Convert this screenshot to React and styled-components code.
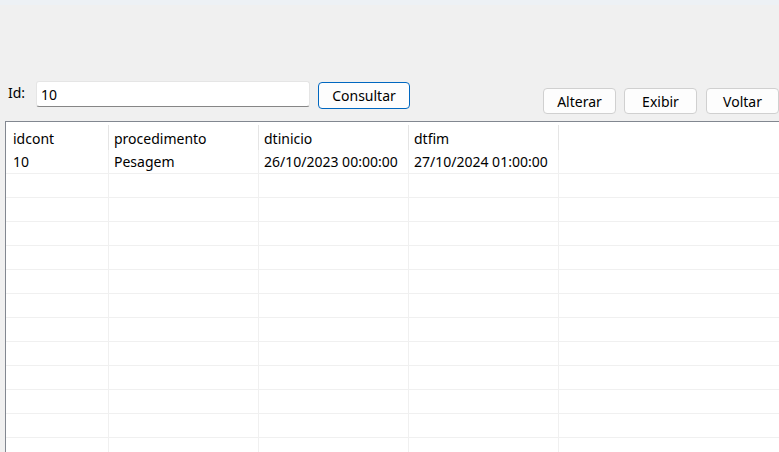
import React from 'react';
import styled, { createGlobalStyle } from 'styled-components';

const GlobalStyle = createGlobalStyle`
	html, body {
		margin: 0;
		padding: 0;
		background: #f0f0f0;
		overflow: hidden;
	}
	body {
		font-family: 'Noto Sans', 'Open Sans', sans-serif;
		color: #000;
	}
`;

const Window = styled.div`
	width: 779px;
	height: 452px;
	display: flex;
	flex-direction: column;
	background: #f0f0f0;
	overflow: hidden;
`;

const TitleStrip = styled.div`
	height: 5px;
	background: #edf1f5;
	flex-shrink: 0;
`;

const Toolbar = styled.div`
	height: 116px;
	flex-shrink: 0;
	display: flex;
	align-items: flex-start;
	padding-top: 76px;
	box-sizing: border-box;
`;

const Label = styled.span`
	font-size: 14px;
	margin: 2px 0 0 8px;
	width: 28px;
`;

const Input = styled.div`
	width: 274px;
	height: 26px;
	box-sizing: border-box;
	background: #fff;
	border: 1px solid #e5e5e5;
	border-bottom: 1px solid #868686;
	border-radius: 3px;
	padding: 0 4px;
	font-size: 14px;
	display: flex;
	align-items: center;
`;

const Button = styled.div`
	width: ${(p) => p.w || 73}px;
	height: ${(p) => p.h || 26}px;
	box-sizing: border-box;
	background: #fdfdfd;
	border: 1px solid ${(p) => (p.primary ? '#0067c0' : '#d0d0d0')};
	border-radius: 4px;
	font-size: 14px;
	display: flex;
	align-items: center;
	justify-content: center;
	flex-shrink: 0;
	margin-top: ${(p) => p.top || 0}px;
	margin-left: ${(p) => p.left || 0}px;
`;

const ActionGroup = styled.div`
	display: flex;
	gap: 8px;
	margin: 7px 0 0 133px;
	flex-shrink: 0;
`;

const Grid = styled.div`
	flex: 1;
	margin-left: 5px;
	background: #fff;
	border-left: 1px solid #828790;
	border-top: 1px solid #828790;
	overflow: hidden;
`;

const Row = styled.div`
	display: flex;
	height: ${(p) => (p.header ? 28 : 24)}px;
	border-bottom: ${(p) => (p.header ? 'none' : '1px solid #f0f0f0')};
	box-sizing: border-box;
`;

const Cell = styled.div`
	width: ${(p) => p.w}px;
	flex-shrink: 0;
	box-sizing: border-box;
	padding-left: ${(p) => p.pad}px;
	font-size: 14px;
	display: flex;
	align-items: ${(p) => (p.header ? 'flex-start' : 'center')};
	padding-top: ${(p) => (p.header ? 4 : 0)}px;
	border-right: 1px solid ${(p) => (p.header ? '#e5e5e5' : '#f0f0f0')};
	margin-top: ${(p) => (p.header ? 3 : 0)}px;
	height: ${(p) => (p.header ? '25px' : 'auto')};
	white-space: nowrap;
`;

const Filler = styled.div`
	flex: 1;
`;

const columns = [
	{ key: 'idcont', w: 103, pad: 7 },
	{ key: 'procedimento', w: 150, pad: 5 },
	{ key: 'dtinicio', w: 150, pad: 5 },
	{ key: 'dtfim', w: 150, pad: 5 },
];

const data = [
	{ idcont: '10', procedimento: 'Pesagem', dtinicio: '26/10/2023 00:00:00', dtfim: '27/10/2024 01:00:00' },
];

const App = () => {
	const rows = [...data, ...Array(12).fill(null)];
	return (
		<Window>
			<GlobalStyle />
			<TitleStrip />
			<Toolbar>
				<Label>Id:</Label>
				<Input>10</Input>
				<Button w={92} h={27} top={1} left={8} primary>
					Consultar
				</Button>
				<ActionGroup>
					<Button>Alterar</Button>
					<Button>Exibir</Button>
					<Button left={1}>Voltar</Button>
				</ActionGroup>
			</Toolbar>
			<Grid>
				<Row header>
					{columns.map((c) => (
						<Cell key={c.key} w={c.w} pad={c.pad} header>
							{c.key}
						</Cell>
					))}
					<Filler />
				</Row>
				{rows.map((r, i) => (
					<Row key={i}>
						{columns.map((c) => (
							<Cell key={c.key} w={c.w} pad={c.pad}>
								{r ? r[c.key] : ''}
							</Cell>
						))}
						<Filler />
					</Row>
				))}
			</Grid>
		</Window>
	);
};

export default App;
